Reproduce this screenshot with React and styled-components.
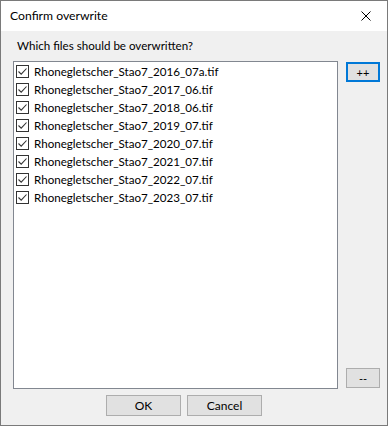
import React from "react";
import styled, { createGlobalStyle } from "styled-components";

const GlobalStyle = createGlobalStyle`
  html, body {
    margin: 0;
    padding: 0;
    background: #ffffff;
  }
  * {
    box-sizing: border-box;
  }
`;

const files = [
  "Rhonegletscher_Stao7_2016_07a.tif",
  "Rhonegletscher_Stao7_2017_06.tif",
  "Rhonegletscher_Stao7_2018_06.tif",
  "Rhonegletscher_Stao7_2019_07.tif",
  "Rhonegletscher_Stao7_2020_07.tif",
  "Rhonegletscher_Stao7_2021_07.tif",
  "Rhonegletscher_Stao7_2022_07.tif",
  "Rhonegletscher_Stao7_2023_07.tif",
];

/* the dialog frame */
const Window = styled.div`
  width: 388px;
  height: 426px;
  border: 1px solid #7a7a7a;
  display: flex;
  flex-direction: column;
  font-family: "Lato", "Noto Sans", sans-serif;
  font-size: 11.6px;
  color: #000;
  background: #f0f0f0;
`;

const TitleBar = styled.div`
  height: 30px;
  background: #ffffff;
  display: flex;
  align-items: center;
  justify-content: space-between;
  padding: 0 10px 1px 9px;
  font-size: 12.2px;
`;

const CloseIcon = styled.svg`
  width: 10px;
  height: 10px;
  margin-right: 6px;
`;

const Body = styled.div`
  flex: 1;
  display: flex;
  flex-direction: column;
  padding: 6px 7px 9px 12px;
`;

const Label = styled.div`
  height: 18px;
  line-height: 18px;
  padding-left: 4px;
  margin-bottom: 6px;
`;

const Content = styled.div`
  display: grid;
  grid-template-columns: 325px 34px;
  column-gap: 8px;
  height: 328px;
`;

const List = styled.div`
  grid-row: 1 / span 2;
  background: #ffffff;
  border: 1px solid #828790;
  padding: 0 2px;
`;

const Row = styled.div`
  height: 18px;
  display: flex;
  align-items: center;
  gap: 5px;
  white-space: nowrap;
`;

const Box = styled.span`
  width: 13px;
  height: 13px;
  border: 1px solid #333333;
  background: #ffffff;
  display: flex;
  align-items: center;
  justify-content: center;
  flex: none;
`;

const SideColumn = styled.div`
  grid-column: 2;
  grid-row: 1 / span 2;
  display: flex;
  flex-direction: column;
  justify-content: space-between;
  padding: 1px 0;
`;

const Button = styled.button`
  font: inherit;
  font-size: ${(p) => p.$fs || 12}px;
  color: #000;
  width: ${(p) => p.$w || 75}px;
  height: ${(p) => p.$h || 21}px;
  padding: 0;
  background: #e1e1e1;
  border: ${(p) => (p.$focused ? "2px solid #0078d7" : "1px solid #adadad")};
  display: flex;
  align-items: center;
  justify-content: center;
  line-height: 1;
`;

const Footer = styled.div`
  display: flex;
  gap: 6px;
  margin-top: 6px;
  padding-left: 93px;
`;

const Check = () => (
  <svg width="11" height="11" viewBox="0 0 11 11">
    <path d="M1.5 5.5 L4.2 8.2 L9.5 2.5" fill="none" stroke="#333" strokeWidth="1.1" />
  </svg>
);

export default function App() {
  return (
    <>
      <GlobalStyle />
      <Window>
        <TitleBar>
          <span>Confirm overwrite</span>
          <CloseIcon viewBox="0 0 10 10">
            <path d="M0.5 0.5 L9.5 9.5 M9.5 0.5 L0.5 9.5" stroke="#000" strokeWidth="1" />
          </CloseIcon>
        </TitleBar>
        <Body>
          <Label>Which files should be overwritten?</Label>
          <Content>
            <List>
              {files.map((f) => (
                <Row key={f}>
                  <Box>
                    <Check />
                  </Box>
                  <span>{f}</span>
                </Row>
              ))}
            </List>
            <SideColumn>
              <Button $w={34} $h={20} $fs={11} $focused>
                ++
              </Button>
              <Button $w={34} $h={20} $fs={11}>
                --
              </Button>
            </SideColumn>
          </Content>
          <Footer>
            <Button>OK</Button>
            <Button>Cancel</Button>
          </Footer>
        </Body>
      </Window>
    </>
  );
}
